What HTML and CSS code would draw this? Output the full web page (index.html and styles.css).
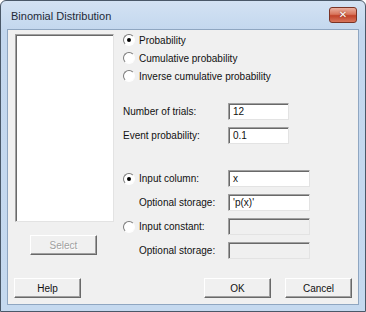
FILE: index.html
```html
<!DOCTYPE html>
<html>
<head>
<meta charset="utf-8">
<link rel="stylesheet" href="styles.css">
</head>
<body>
<div class="window">
  <div class="titlebar">
    <span class="title">Binomial Distribution</span>
    <div class="close"><span>✕</span></div>
  </div>
  <div class="client">
    <div class="main">
      <div class="left">
        <div class="listbox"></div>
        <div class="btn select">Select</div>
      </div>
      <div class="right">
        <div class="radios">
          <div class="radio on"><span class="dot"></span>Probability</div>
          <div class="radio"><span class="dot"></span>Cumulative probability</div>
          <div class="radio"><span class="dot"></span>Inverse cumulative probability</div>
        </div>
        <div class="form params">
          <div class="lbl">Number of trials:</div><div class="field short">12</div>
          <div class="lbl">Event probability:</div><div class="field short">0.1</div>
        </div>
        <div class="form inputs">
          <div class="radio on"><span class="dot"></span>Input column:</div><div class="field long">x</div>
          <div class="lbl sub">Optional storage:</div><div class="field long">'p(x)'</div>
          <div class="radio"><span class="dot"></span>Input constant:</div><div class="field long off"></div>
          <div class="lbl sub">Optional storage:</div><div class="field long off"></div>
        </div>
      </div>
    </div>
    <div class="bottom">
      <div class="btn help">Help</div>
      <div class="spacer"></div>
      <div class="btn">OK</div>
      <div class="btn">Cancel</div>
    </div>
  </div>
</div>
</body>
</html>
```

FILE: styles.css
```css
html, body {
  margin: 0;
  padding: 0;
  background: #ffffff;
}
body {
  font-family: "Liberation Sans", Arial, sans-serif;
  font-size: 10px;
  color: #111;
}
.window {
  width: 366px;
  height: 312px;
  box-sizing: border-box;
  border: 1px solid #4a5868;
  border-radius: 6px 6px 0 0;
  background: linear-gradient(#d3e2f3, #c3d7ee 30px, #c5d9ef);
  padding: 0 6px 6px 6px;
  display: flex;
  flex-direction: column;
}
.titlebar {
  height: 28px;
  display: flex;
  align-items: center;
  padding: 2px 0 0 4px;
  box-sizing: border-box;
}
.title {
  font-size: 11px;
  color: #1e2a38;
  flex: 1;
}
.close {
  width: 28px;
  height: 16px;
  margin-right: 2px;
  margin-top: -2px;
  box-sizing: border-box;
  border: 1px solid #7a3325;
  border-radius: 3px;
  background: linear-gradient(#eab0a0, #d9755c 45%, #c2432a 55%, #d8755c);
  display: flex;
  align-items: center;
  justify-content: center;
  color: #fff;
  font-family: "DejaVu Sans", sans-serif;
  font-weight: bold;
  font-size: 10px;
  line-height: 1;
  text-shadow: 0 0 2px #7a2a1a;
}
.client {
  flex: 1;
  background: #f0f0f0;
  border: 1px solid #8fa6c1;
  display: flex;
  flex-direction: column;
  padding: 4px 6px 6px 6px;
}
.main {
  display: flex;
}
.left {
  width: 99px;
  margin-left: 1px;
  display: flex;
  flex-direction: column;
}
.listbox {
  height: 188px;
  box-sizing: border-box;
  background: #fff;
  border-top: 1px solid #a0a0a0;
  border-left: 1px solid #a0a0a0;
  border-right: 1px solid #e3e3e3;
  border-bottom: 1px solid #e3e3e3;
  box-shadow: inset 1px 1px 0 #696969;
}
.btn {
  width: 67px;
  height: 20px;
  box-sizing: border-box;
  background: #f0f0f0;
  border-top: 1px solid #fff;
  border-left: 1px solid #fff;
  border-right: 1px solid #696969;
  border-bottom: 1px solid #696969;
  box-shadow: inset -1px -1px 0 #a0a0a0;
  display: flex;
  align-items: center;
  justify-content: center;
}
.select {
  margin-top: 13px;
  margin-left: 15px;
  color: #a0a0a0;
  text-shadow: 1px 1px 0 #fff;
}
.right {
  margin-left: 7px;
  display: flex;
  flex-direction: column;
}
.radios {
  display: flex;
  flex-direction: column;
  gap: 6px;
}
.radio {
  height: 12px;
  display: flex;
  align-items: center;
  padding-left: 2px;
}
.dot {
  width: 12px;
  height: 12px;
  box-sizing: border-box;
  border-radius: 50%;
  background: #fff;
  border: 1px solid;
  border-color: #7a7a7a #fdfdfd #fdfdfd #7a7a7a;
  margin-right: 4px;
  display: flex;
  align-items: center;
  justify-content: center;
}
.radio.on .dot::after {
  content: "";
  width: 4px;
  height: 4px;
  border-radius: 50%;
  background: #000;
}
.form {
  display: grid;
  grid-template-columns: 107px auto;
  row-gap: 7px;
  align-items: center;
}
.params {
  margin-top: 21px;
}
.inputs {
  margin-top: 26px;
}
.lbl {
  padding-left: 2px;
}
.lbl.sub {
  padding-left: 18px;
}
.field {
  height: 17px;
  box-sizing: border-box;
  background: #fff;
  border-top: 1px solid #a0a0a0;
  border-left: 1px solid #a0a0a0;
  border-right: 1px solid #e3e3e3;
  border-bottom: 1px solid #e3e3e3;
  box-shadow: inset 1px 1px 0 #696969;
  padding: 2px 0 0 4px;
  font-size: 10px;
}
.field.short { width: 61px; }
.field.long { width: 82px; }
.field.off { background: #f0f0f0; }
.bottom {
  margin-top: auto;
  display: flex;
  gap: 14px;
}
.spacer { flex: 1; }
```
